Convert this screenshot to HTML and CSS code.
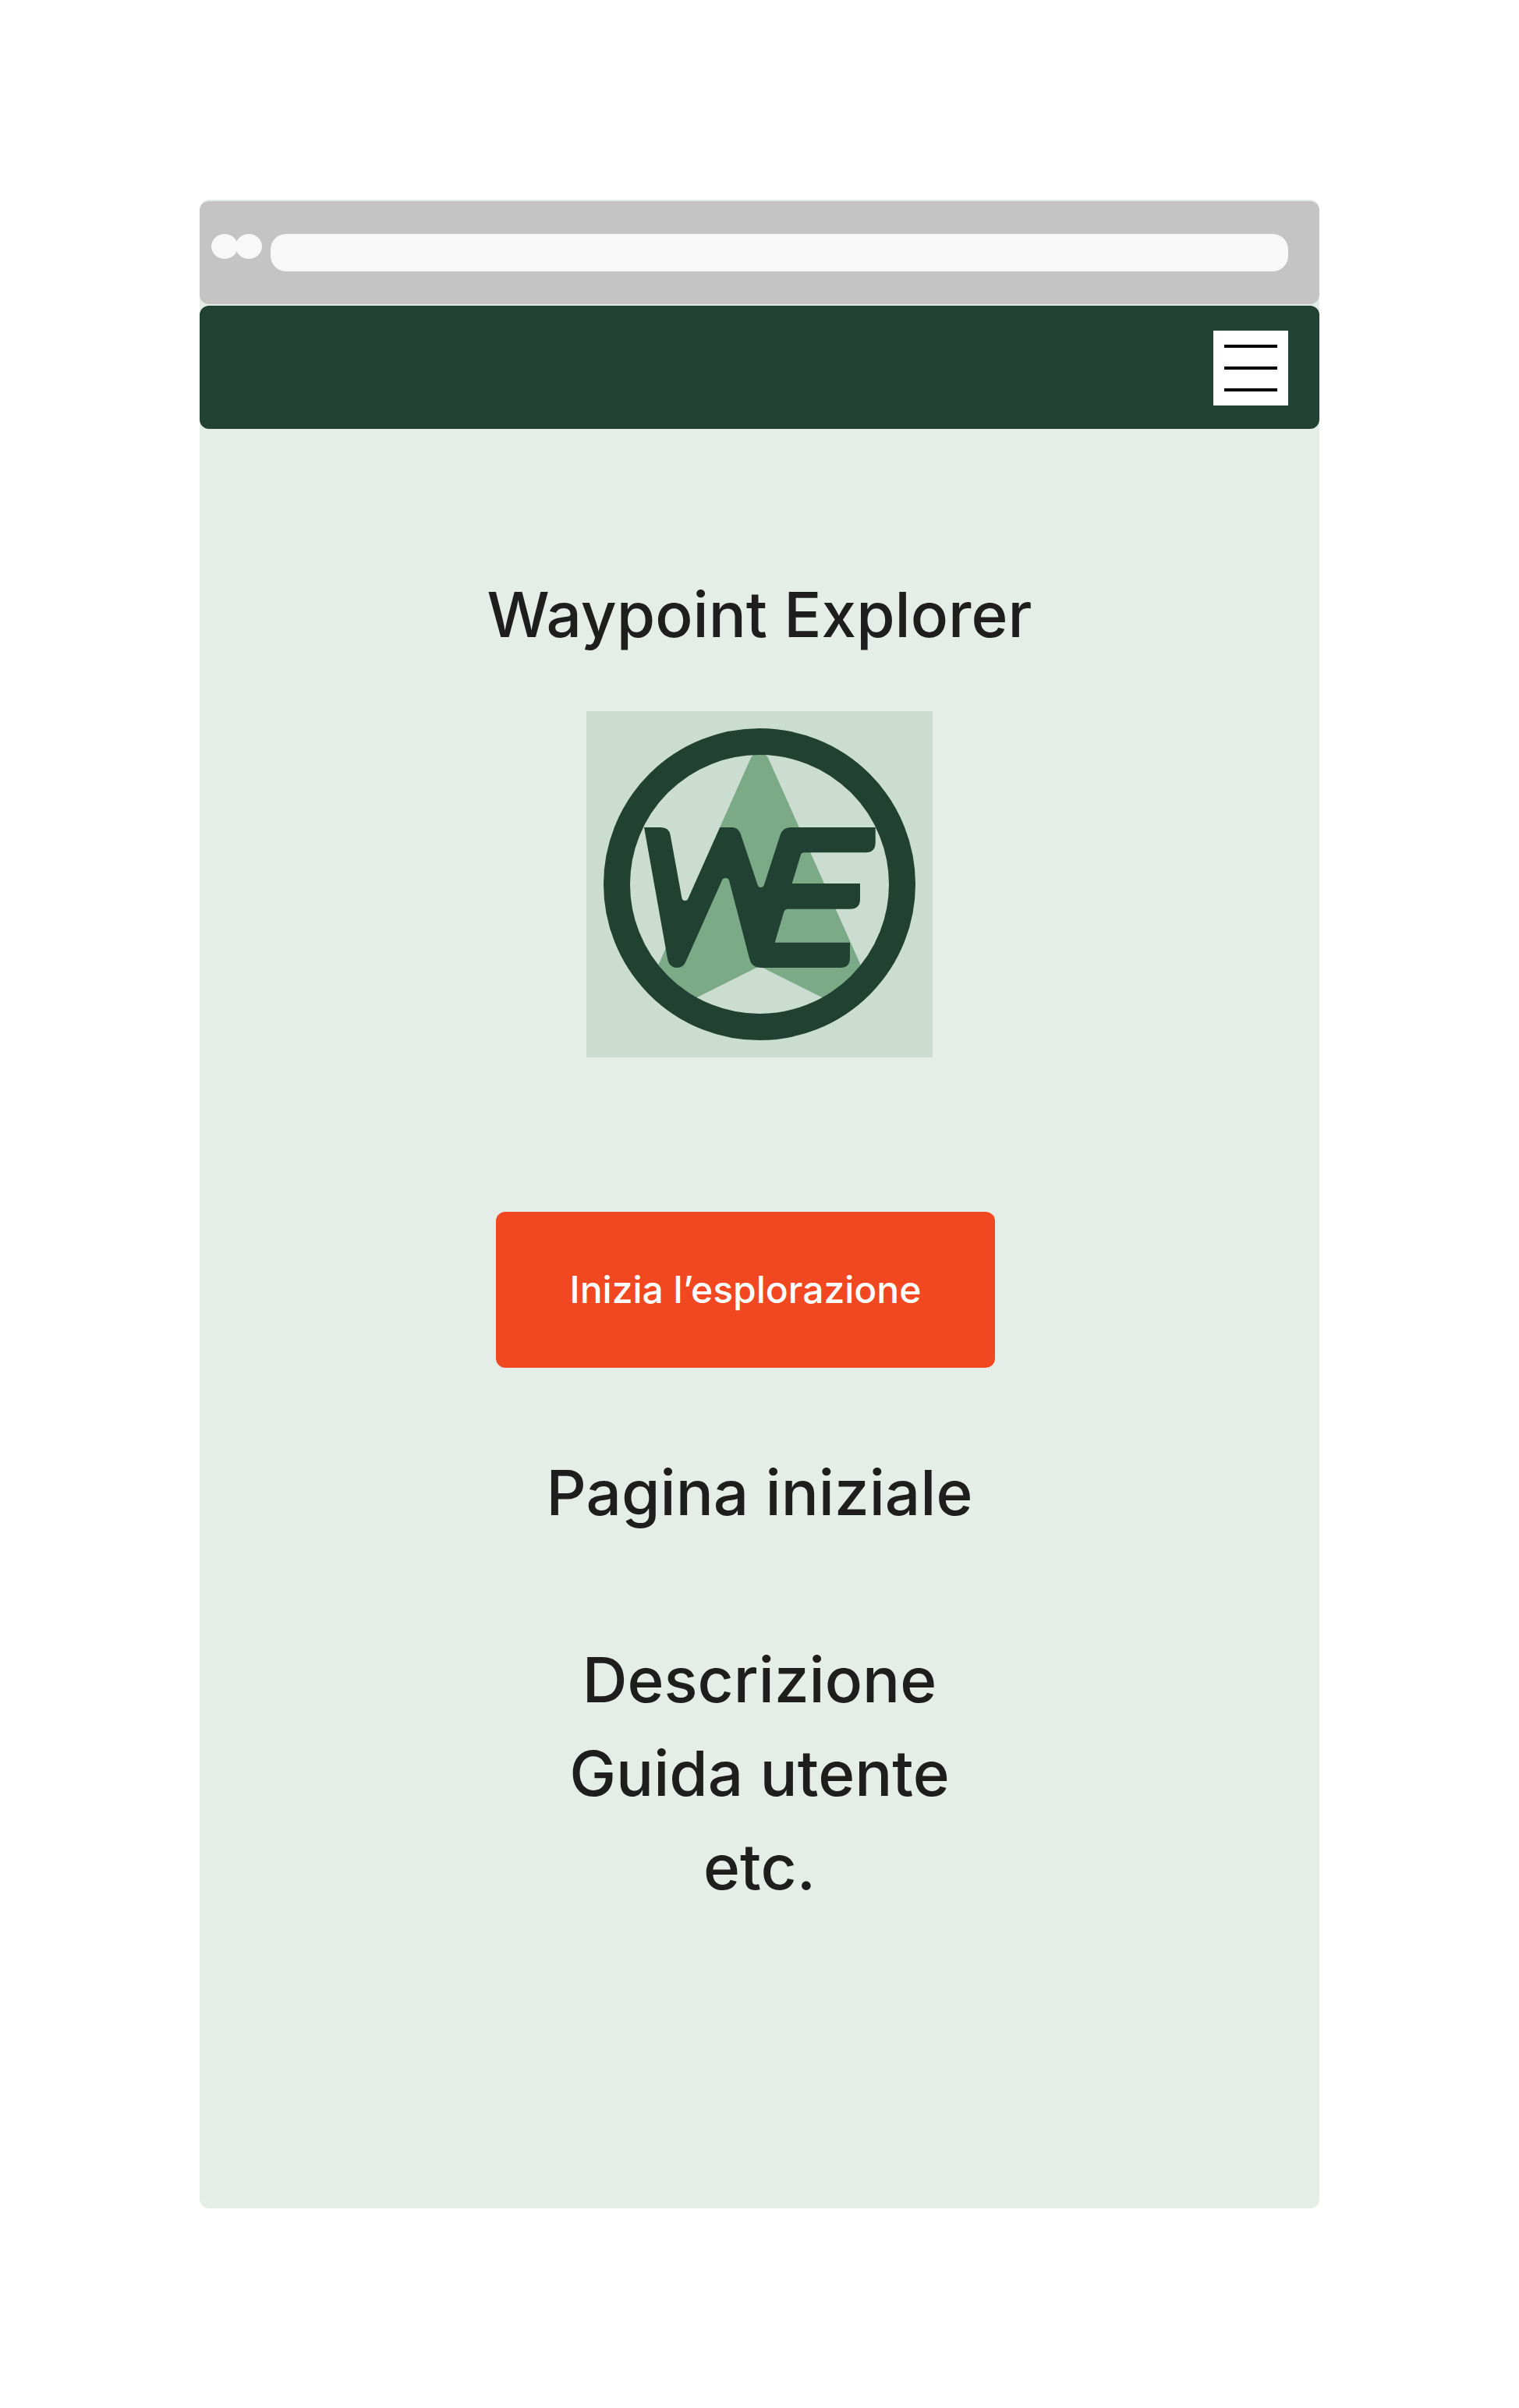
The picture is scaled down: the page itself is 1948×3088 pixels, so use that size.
FILE: index.html
```html
<!DOCTYPE html>
<html lang="it">
<head>
  <meta charset="utf-8">
  <meta name="viewport" content="width=device-width, initial-scale=1">
  <title>Waypoint Explorer</title>
  <link rel="stylesheet" href="styles.css">
</head>
<body>
  <div class="window">
    <div class="browser-bar">
      <div class="dots"><span class="dot"></span><span class="dot"></span></div>
      <input class="address" type="text" aria-label="Indirizzo">
    </div>
    <header class="navbar">
      <button class="menu" type="button" aria-label="Menu">
        <span class="menu-line"></span>
        <span class="menu-line"></span>
        <span class="menu-line"></span>
      </button>
    </header>
    <main class="content">
      <h1 class="title">Waypoint Explorer</h1>
      <svg class="logo" viewBox="0 0 444 444" role="img" aria-label="Logo Waypoint Explorer">
        <rect width="444" height="444" fill="#cbddd1"/>
        <path fill="#7ca986" d="M210 62Q213 54 222 54T234 62L356 335L308 370L228 330Q222 327.500 216 330L136 370L88 335Z"/>
        <circle cx="222" cy="222" r="183" fill="none" stroke="#214132" stroke-width="34"/>
        <path fill="#214132" d="M74 149H95.500Q106 149 107.700 159L122.300 239Q123 243 126.500 243T131 239.300L171.300 149H187.500Q195 149 198.300 159L219.500 222.500Q220.500 226 223.500 226T228 222.500L248.500 159Q252 149 261.500 149H370.700V168.500Q370.700 181.300 358 181.300H279.500Q275.500 181.300 274.500 185.500L263.700 221H351V241Q351 253.700 338 253.700H258.500Q254.500 253.700 253.300 257.500L241.700 296.700H338V316.500Q338 329 325.500 329H223.500Q212 329 209.300 318L183 217Q182 214 178.500 214T174 216.700L127.300 321.500Q124 329 116.500 329Q106.500 329 104.300 318.700Z"/>
      </svg>
      <button class="start" type="button">Inizia l’esplorazione</button>
      <h2 class="heading">Pagina iniziale</h2>
      <ul class="sections">
        <li>Descrizione</li>
        <li>Guida utente</li>
        <li>etc.</li>
      </ul>
    </main>
  </div>
</body>
</html>
```
FILE: styles.css
```css
* {
  box-sizing: border-box;
}

body {
  margin: 0;
  padding: 256px;
  background: #fff;
  color: #1e1e1e;
  font-family: Inter, "Liberation Sans", sans-serif;
  font-size: 80px;
  font-weight: 500;
  line-height: 120px;
}

.window {
  display: flex;
  flex-direction: column;
  gap: 2px;
  padding-top: 2px;
  border-radius: 12px;
  background: #e4ede8;
}

.browser-bar {
  display: flex;
  align-items: flex-start;
  gap: 11px;
  padding: 42px 40px 42px 15px;
  border-radius: 12px;
  background: #c4c4c4;
}

.dots {
  display: flex;
}

.dot {
  width: 34px;
  height: 32px;
  border-radius: 50%;
  background: #f8f8f8;
}

.dot + .dot {
  margin-left: -3px;
}

.address {
  flex: 1;
  min-width: 0;
  height: 48px;
  padding: 0 20px;
  border: 0;
  border-radius: 20px;
  background: #f8f8f8;
  font: inherit;
  font-size: 24px;
}

.navbar {
  display: flex;
  justify-content: flex-end;
  padding: 32px 40px 30px;
  border-radius: 12px;
  background: #214132;
}

.menu {
  display: flex;
  flex-direction: column;
  justify-content: center;
  gap: 24px;
  width: 96px;
  height: 96px;
  padding: 0 14px;
  border: 0;
  background: #fff;
}

.menu-line {
  height: 4px;
  background: #000;
}

.content {
  display: flex;
  flex-direction: column;
  align-items: center;
  padding: 176px 0 378px;
  text-align: center;
}

.title,
.heading {
  margin: 0;
  font-size: 80px;
  font-weight: 500;
}

.logo {
  width: 444px;
  margin-top: 64px;
}

.start {
  width: 640px;
  height: 200px;
  margin: 198px 36px 100px 0;
  padding: 0;
  border: 0;
  border-radius: 12px;
  background: #f24822;
  color: #fff;
  font: inherit;
  font-size: 48px;
  line-height: 72px;
}

.sections {
  margin: 120px 0 0;
  padding: 0;
  list-style: none;
}
```
